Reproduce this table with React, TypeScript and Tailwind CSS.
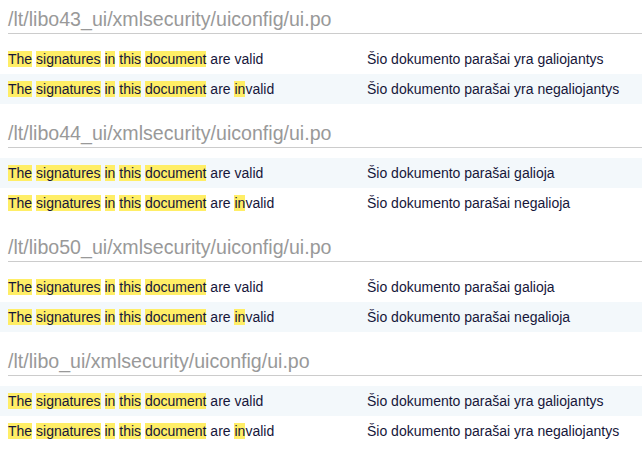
const sections = [
  {
    path: "/lt/libo43_ui/xmlsecurity/uiconfig/ui.po",
    valid: "Šio dokumento parašai yra galiojantys",
    invalid: "Šio dokumento parašai yra negaliojantys",
  },
  {
    path: "/lt/libo44_ui/xmlsecurity/uiconfig/ui.po",
    valid: "Šio dokumento parašai galioja",
    invalid: "Šio dokumento parašai negalioja",
  },
  {
    path: "/lt/libo50_ui/xmlsecurity/uiconfig/ui.po",
    valid: "Šio dokumento parašai galioja",
    invalid: "Šio dokumento parašai negalioja",
  },
  {
    path: "/lt/libo_ui/xmlsecurity/uiconfig/ui.po",
    valid: "Šio dokumento parašai yra galiojantys",
    invalid: "Šio dokumento parašai yra negaliojantys",
  },
];

const Hl = ({ children }: { children: string }) => (
  <span className="bg-[#ffee66]">{children}</span>
);

const Source = ({ invalid }: { invalid: boolean }) => (
  <>
    <Hl>The</Hl> <Hl>signatures</Hl> <Hl>in</Hl> <Hl>this</Hl> <Hl>document</Hl> are{" "}
    {invalid ? (
      <>
        <Hl>in</Hl>valid
      </>
    ) : (
      "valid"
    )}
  </>
);

export default function App() {
  return (
    <div className="w-[642px] bg-white text-[14px] text-[#16163a]" style={{ fontFamily: '"Liberation Sans", Arial, sans-serif' }}>
      {sections.map((s, i) => (
        <div key={s.path} className="pt-2 pb-[10px]">
          <h2 className="ml-2 text-[19.6px] leading-[22px] pb-[3px] border-b border-[#cccccc] text-[#999999] font-normal">
            {s.path}
          </h2>
          <div className="mt-[10px]">
            {[false, true].map((inv) => {
              const shaded = (i + (inv ? 1 : 0)) % 2 === 1;
              return (
                <div
                  key={String(inv)}
                  className={`grid grid-cols-[359px_1fr] h-[30px] items-center ${shaded ? "bg-[#f3f8fb]" : "bg-white"}`}
                >
                  <div className="px-2 whitespace-nowrap">
                    <Source invalid={inv} />
                  </div>
                  <div className="px-2 whitespace-nowrap">{inv ? s.invalid : s.valid}</div>
                </div>
              );
            })}
          </div>
        </div>
      ))}
    </div>
  );
}
